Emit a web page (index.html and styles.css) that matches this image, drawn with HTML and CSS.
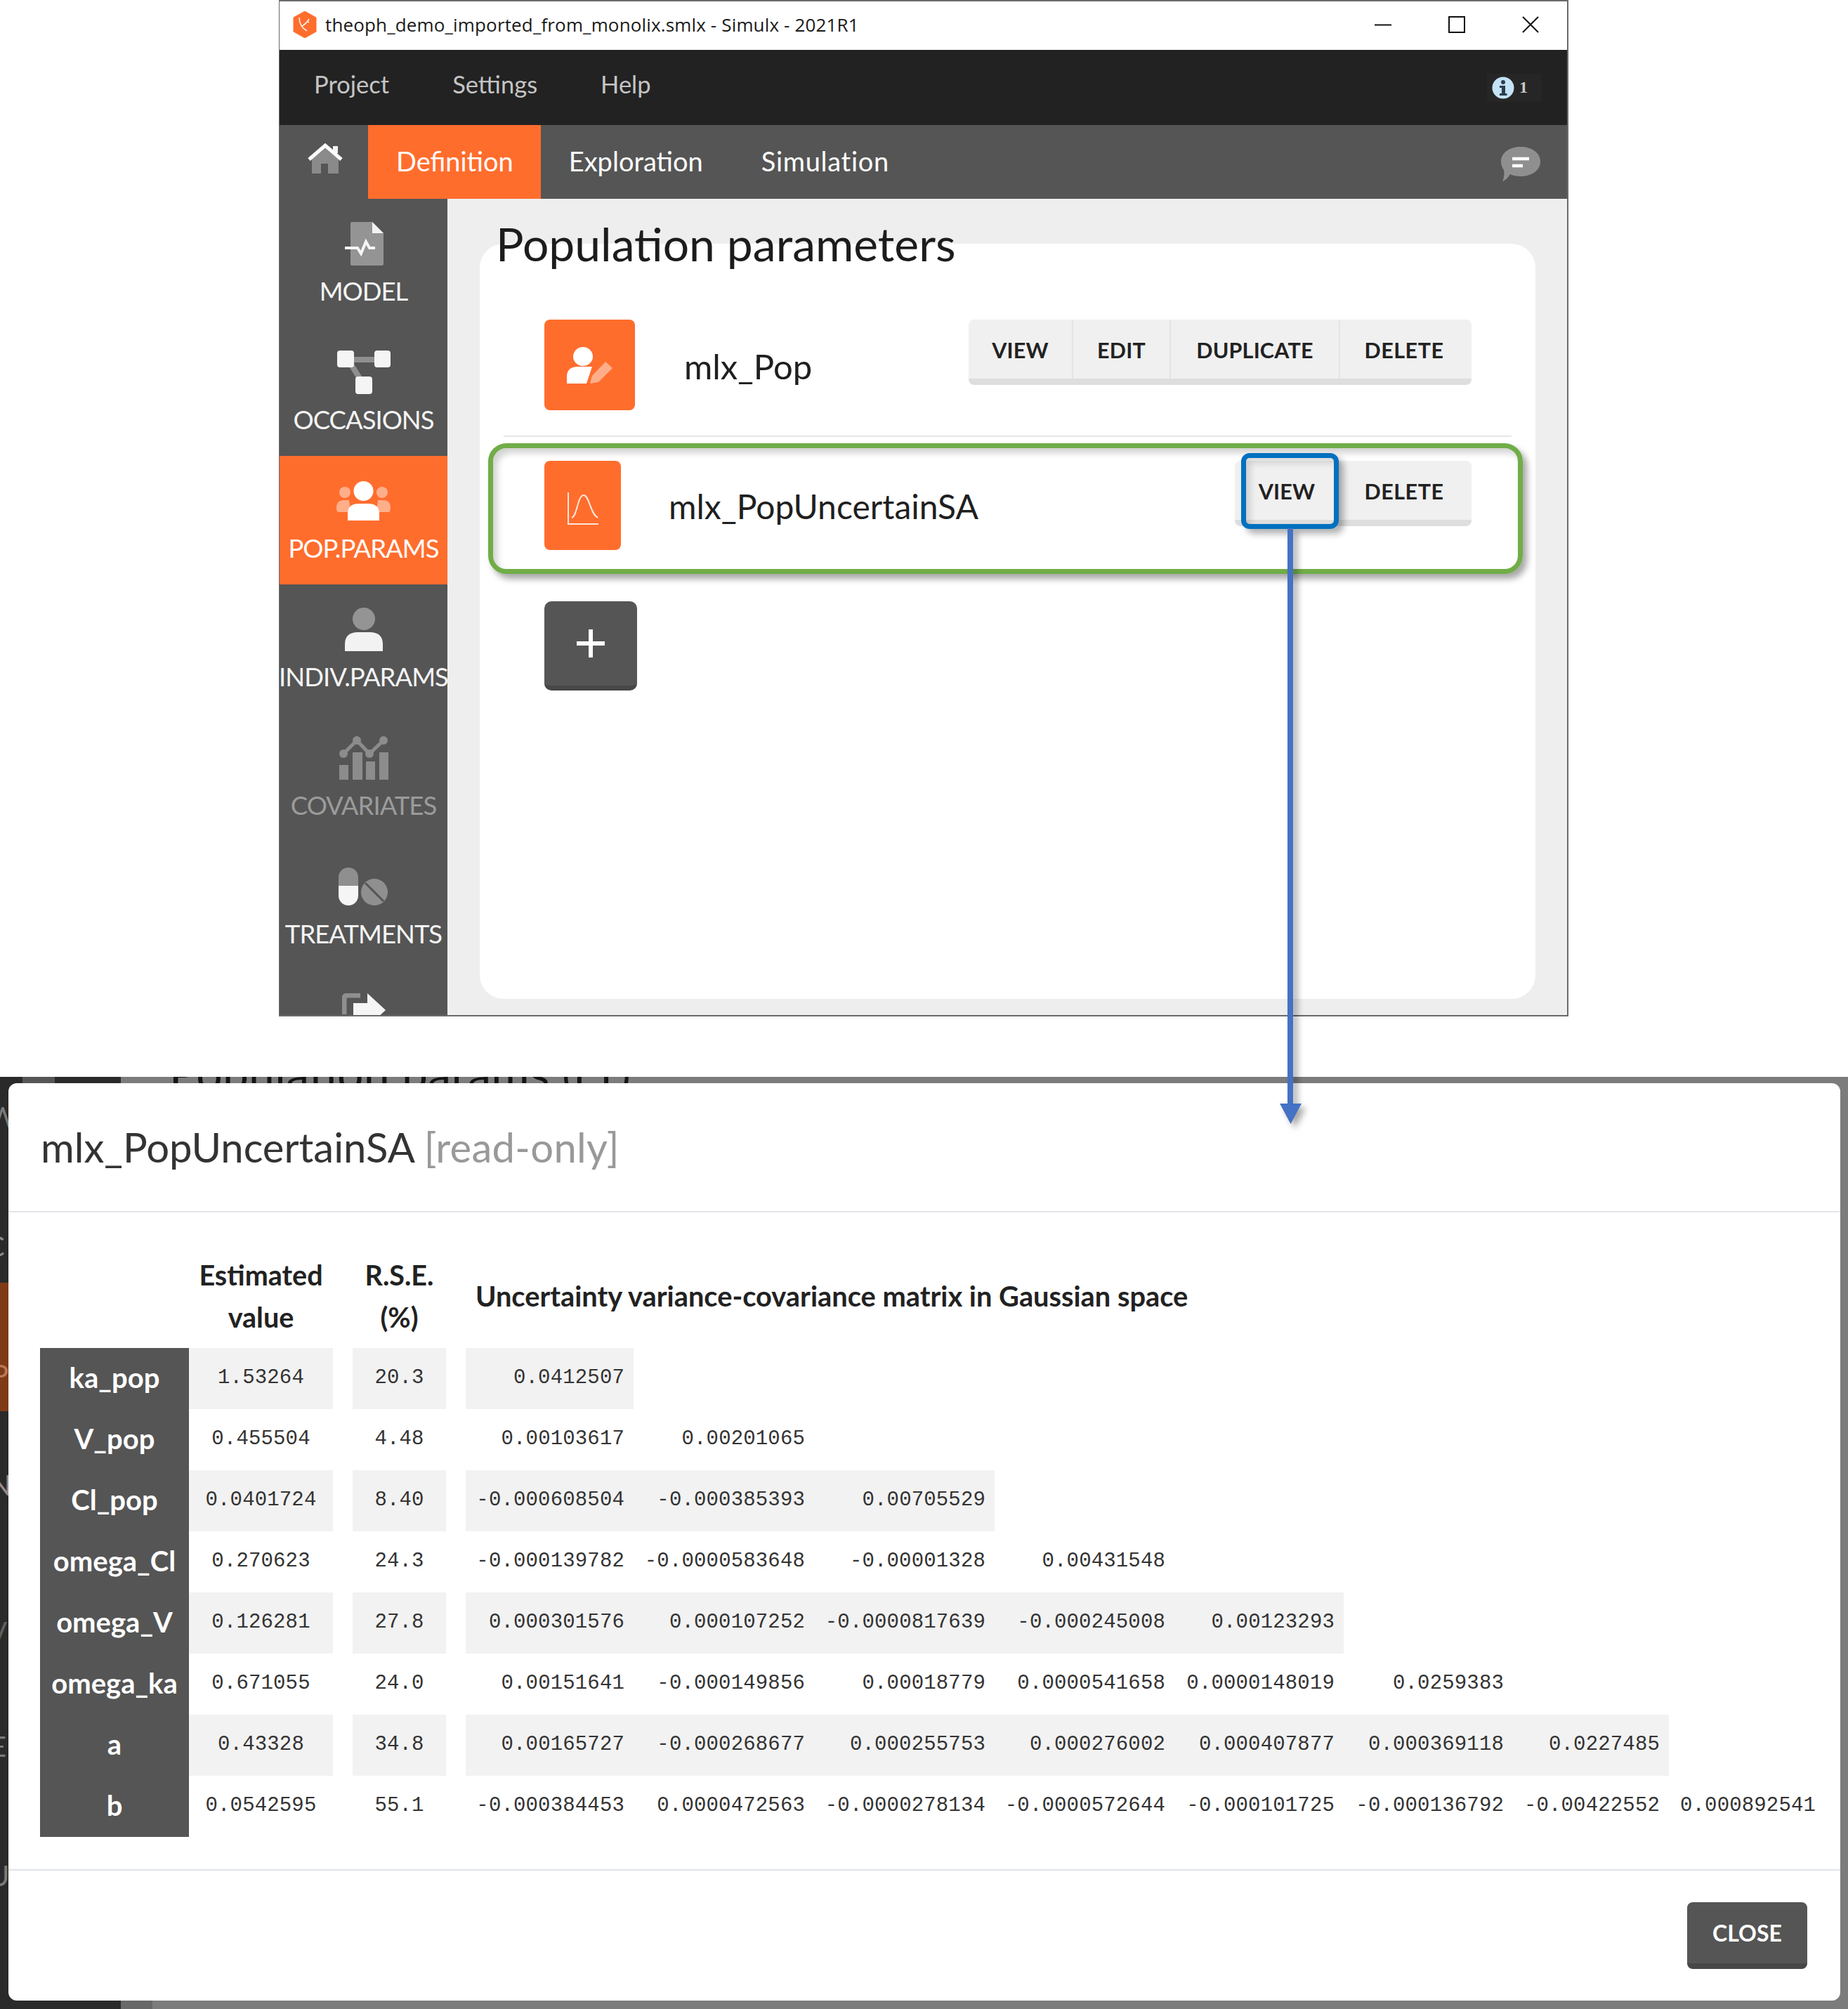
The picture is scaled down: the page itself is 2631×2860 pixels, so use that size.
FILE: index.html
```html
<!DOCTYPE html>
<html lang="en">
<head>
<meta charset="utf-8">
<title>Simulx population parameters</title>
<link rel="stylesheet" href="styles.css">
</head>
<body>
<div class="page">
  <section class="window">
    <header class="titlebar">
      <svg class="logo" viewBox="0 0 34 38" width="34" height="38"><path d="M17 0 33 9V29L17 38 1 29V9Z" fill="#ff6d2d" stroke="#ff6d2d" stroke-linejoin="round" stroke-width="1"/><path d="M9 9c0 9 4 15 11 19M13 21c4-2 7-5 10-10M21 15l2 1" fill="none" stroke="#fff" stroke-width="1.6" opacity=".9"/></svg>
      <span class="doc-title">theoph_demo_imported_from_monolix.smlx - Simulx - 2021R1</span>
      <div class="win-controls">
        <svg viewBox="0 0 24 24" width="24" height="24"><path d="M0 12.500H24" stroke="#111" stroke-width="2"/></svg>
        <svg viewBox="0 0 24 24" width="24" height="24"><rect x="1" y="1" width="22" height="22" fill="none" stroke="#111" stroke-width="2"/></svg>
        <svg viewBox="0 0 24 24" width="24" height="24"><path d="M1 1 23 23M23 1 1 23" stroke="#111" stroke-width="2"/></svg>
      </div>
    </header>
    <nav class="menubar">
      <span>Project</span><span>Settings</span><span>Help</span>
      <div class="info"><svg viewBox="0 0 32 32" width="32" height="32"><circle cx="16" cy="16" r="15.500" fill="#c3e3f7"/><circle cx="16" cy="8" r="3" fill="#2b3f4e"/><path d="M11 13h8v11h2.500v3H11v-3h3v-8h-3Z" fill="#2b3f4e"/></svg><b>1</b></div>
    </nav>
    <nav class="navbar">
      <div class="home"><svg viewBox="0 0 50 44" width="50" height="44"><path d="M6 21 25 5 44 21V43H29V29H19V43H6Z" fill="#8a8a8a"/><path d="M36 4H43V14H36Z" fill="#f4f4f4"/><path d="M2 23 25 3 48 23" fill="none" stroke="#fff" stroke-width="5"/></svg></div>
      <a class="tab is-active">Definition</a>
      <a class="tab">Exploration</a>
      <a class="tab tab-sim">Simulation</a>
      <svg class="chat" viewBox="0 0 56 50" width="56" height="50"><path d="M28 0C43 0 56 8 56 21 56 34 43 42 28 42 22 42 17 41 13 39 10 44 6 48 2 49 4 45 5 40 4 33 1 29 0 25 0 21 0 8 13 0 28 0Z" fill="#8f8f8f"/><path d="M16 17H40M16 27H31" stroke="#fff" stroke-width="4.500"/></svg>
    </nav>
    <div class="workspace">
      <aside class="sidebar">
        <div class="side-item">
          <span class="side-icon"><svg viewBox="0 0 56 62" width="56" height="62"><path d="M9 2Q9 0 11 0H40L56 16V60Q56 62 54 62H11Q9 62 9 60Z" fill="#949494"/><path d="M40 0 56 16H40Z" fill="#f2f2f2"/><path d="M1 37H19L24 45 31 28 36 37H44" fill="none" stroke="#f5f5f5" stroke-width="4"/></svg></span>
          <span class="side-label">MODEL</span>
        </div>
        <div class="side-item">
          <span class="side-icon"><svg viewBox="0 0 76 62" width="76" height="62"><path d="M20 13H56M20 20 36 46" fill="none" stroke="#8f8f8f" stroke-width="8"/><rect x="0" y="0" width="24" height="24" rx="4" fill="#f5f5f5"/><rect x="53" y="0" width="23" height="24" rx="4" fill="#f5f5f5"/><rect x="26" y="37" width="24" height="25" rx="4" fill="#f5f5f5"/></svg></span>
          <span class="side-label">OCCASIONS</span>
        </div>
        <div class="side-item is-active">
          <span class="side-icon"><svg viewBox="0 0 77 56" width="77" height="56"><g fill="#ffae8a"><circle cx="12" cy="16" r="8"/><circle cx="65" cy="16" r="8"/><path d="M0 38Q0 27 11 27H18L20 44H3Q0 44 0 38ZM77 38Q77 27 66 27H59L57 44H74Q77 44 77 38Z"/></g><circle cx="38.500" cy="14" r="14" fill="#fff"/><path d="M16 56V46Q16 33 30 32H47Q61 33 61 46V56Z" fill="#fff"/></svg></span>
          <span class="side-label">POP.PARAMS</span>
        </div>
        <div class="side-item">
          <span class="side-icon"><svg viewBox="0 0 56 62" width="56" height="62"><circle cx="28" cy="16" r="16" fill="#949494"/><path d="M1 62V52Q1 36 18 35H38Q55 36 55 52V62Z" fill="#f2f2f2"/></svg></span>
          <span class="side-label">INDIV.PARAMS</span>
        </div>
        <div class="side-item is-dim">
          <span class="side-icon"><svg viewBox="0 0 70 62" width="70" height="62" fill="#8c8c8c"><path d="M6 25 25 6 43 25 63 6" fill="none" stroke="#8c8c8c" stroke-width="5"/><circle cx="6" cy="25" r="6"/><circle cx="25" cy="6" r="6"/><circle cx="43" cy="25" r="6"/><circle cx="63" cy="6" r="6"/><rect x="0" y="41" width="13" height="21"/><rect x="19" y="23" width="14" height="39"/><rect x="38" y="36" width="13" height="26"/><rect x="57" y="23" width="13" height="39"/></svg></span>
          <span class="side-label">COVARIATES</span>
        </div>
        <div class="side-item">
          <span class="side-icon"><svg viewBox="0 0 71 54" width="71" height="54"><path d="M0 26V14A14 14 0 0 1 28 14V26Z" fill="#8f8f8f"/><path d="M0 26H28V40A14 14 0 0 1 0 40Z" fill="#f5f5f5"/><circle cx="51" cy="35" r="19" fill="#8f8f8f"/><path d="M38 22 64 48" stroke="#555" stroke-width="3"/></svg></span>
          <span class="side-label">TREATMENTS</span>
        </div>
        <div class="side-item">
          <span class="side-icon"><svg viewBox="0 0 62 62" width="62" height="62"><path d="M3 30V8Q3 3 8 3H26" fill="none" stroke="#8f8f8f" stroke-width="7"/><path d="M16 14H36V0L62 24 36 48V34H16Z" fill="#f5f5f5"/></svg></span>
          <span class="side-label">EXPORT</span>
        </div>
      </aside>
      <main class="panel">
        <h1 class="panel-title">Population parameters</h1>
        <div class="card">
          <div class="row row-first">
            <span class="tile"><svg viewBox="0 0 65 52" width="65" height="52"><ellipse cx="23" cy="13.500" rx="14" ry="13.500" fill="#fff"/><path d="M0 52V42Q0 29 14 28H36L28 52Z" fill="#fff"/><path d="M33 52 36 41 55 21 65 30 45 50Z" fill="#ffae8a"/></svg></span>
            <span class="row-name">mlx_Pop</span>
            <div class="btn-group"><button class="b-view">VIEW</button><button class="b-edit">EDIT</button><button class="b-dup">DUPLICATE</button><button class="b-del">DELETE</button></div>
          </div>
          <div class="row row-second">
            <span class="tile tile-small"><svg viewBox="0 0 44 46" width="44" height="46"><path d="M1 0V45H44M6 36C14 34 14 4 23 4 31 4 32 30 43 36" fill="none" stroke="#ffe6da" stroke-width="2"/></svg></span>
            <span class="row-name">mlx_PopUncertainSA</span>
            <div class="btn-group"><button class="b-view2">VIEW</button><button class="b-del">DELETE</button></div>
          </div>
          <button class="add"><svg viewBox="0 0 40 40" width="40" height="40"><path d="M20 0V40M0 20H40" stroke="#fff" stroke-width="6"/></svg></button>
        </div>
      </main>
    </div>
  </section>

  <section class="stage">
    <div class="backdrop">
      <div class="rail">
        <span class="rl rl-w">W</span>
        <span class="rl rl-c">C</span>
        <div class="rail-active"><span class="rl">P</span></div>
        <span class="rl rl-n">N</span>
        <span class="rl rl-v">V</span>
        <span class="rl rl-e">E</span>
        <span class="rl rl-u">U</span>
      </div>
      <div class="bg-main"><span class="bg-title">Population params (r1)</span></div>
    </div>
    <div class="modal">
      <header class="modal-head"><span>mlx_PopUncertainSA</span> <span class="ro">[read-only]</span></header>
      <div class="modal-body">
        <table class="matrix">
          <colgroup>
            <col class="c-label"><col class="c-est"><col class="c-gap"><col class="c-rse"><col class="c-gap">
            <col class="c-m1"><col class="c-m2"><col class="c-m2"><col class="c-m4"><col class="c-m5"><col class="c-m5"><col class="c-m7"><col class="c-m7">
          </colgroup>
          <thead>
            <tr><th></th><th>Estimated<br>value</th><th></th><th>R.S.E.<br>(%)</th><th></th><th colspan="8" class="th-left">Uncertainty variance-covariance matrix in Gaussian space</th></tr>
          </thead>
          <tbody>
            <tr class="alt"><th>ka_pop</th><td class="v c">1.53264</td><td></td><td class="v c">20.3</td><td></td><td class="v">0.0412507</td><td></td><td></td><td></td><td></td><td></td><td></td><td></td></tr>
            <tr><th>V_pop</th><td class="v c">0.455504</td><td></td><td class="v c">4.48</td><td></td><td class="v">0.00103617</td><td class="v">0.00201065</td><td></td><td></td><td></td><td></td><td></td><td></td></tr>
            <tr class="alt"><th>Cl_pop</th><td class="v c">0.0401724</td><td></td><td class="v c">8.40</td><td></td><td class="v">-0.000608504</td><td class="v">-0.000385393</td><td class="v">0.00705529</td><td></td><td></td><td></td><td></td><td></td></tr>
            <tr><th>omega_Cl</th><td class="v c">0.270623</td><td></td><td class="v c">24.3</td><td></td><td class="v">-0.000139782</td><td class="v">-0.0000583648</td><td class="v">-0.00001328</td><td class="v">0.00431548</td><td></td><td></td><td></td><td></td></tr>
            <tr class="alt"><th>omega_V</th><td class="v c">0.126281</td><td></td><td class="v c">27.8</td><td></td><td class="v">0.000301576</td><td class="v">0.000107252</td><td class="v">-0.0000817639</td><td class="v">-0.000245008</td><td class="v">0.00123293</td><td></td><td></td><td></td></tr>
            <tr><th>omega_ka</th><td class="v c">0.671055</td><td></td><td class="v c">24.0</td><td></td><td class="v">0.00151641</td><td class="v">-0.000149856</td><td class="v">0.00018779</td><td class="v">0.0000541658</td><td class="v">0.0000148019</td><td class="v">0.0259383</td><td></td><td></td></tr>
            <tr class="alt"><th>a</th><td class="v c">0.43328</td><td></td><td class="v c">34.8</td><td></td><td class="v">0.00165727</td><td class="v">-0.000268677</td><td class="v">0.000255753</td><td class="v">0.000276002</td><td class="v">0.000407877</td><td class="v">0.000369118</td><td class="v">0.0227485</td><td></td></tr>
            <tr><th>b</th><td class="v c">0.0542595</td><td></td><td class="v c">55.1</td><td></td><td class="v">-0.000384453</td><td class="v">0.0000472563</td><td class="v">-0.0000278134</td><td class="v">-0.0000572644</td><td class="v">-0.000101725</td><td class="v">-0.000136792</td><td class="v">-0.00422552</td><td class="v">0.000892541</td></tr>
          </tbody>
        </table>
      </div>
      <footer class="modal-foot"><button class="close">CLOSE</button></footer>
    </div>
  </section>

  <div class="callout-green"></div>
  <div class="callout-blue"></div>
  <svg class="arrow" viewBox="0 0 60 850" width="60" height="850"><rect x="26" y="0" width="8" height="822" fill="#4472c4"/><path d="M15 819H46L30.500 848Z" fill="#4472c4"/></svg>
</div>
</body>
</html>
```

FILE: styles.css
```css
* { box-sizing: border-box; }
html, body { margin: 0; padding: 0; background: #fff; }
body { font-family: "Lato", "Liberation Sans", sans-serif; color: #222; }
.page { position: relative; width: 2631px; height: 2860px; overflow: hidden; }
button { font: inherit; border: 0; cursor: pointer; }

/* top application window */
.window { margin-left: 397px; width: 1836px; height: 1447px; border: 2px solid #6a6a6a; border-width: 2px 2px 2px 1px; display: flex; flex-direction: column; background: #eee; overflow: hidden; }
.titlebar { height: 69px; background: #fff; display: flex; align-items: center; padding-left: 19px; padding-bottom: 3px; flex: none; }
.logo { flex: none; }
.doc-title { margin-left: 12px; font-family: "Open Sans", sans-serif; font-size: 26px; color: #1a1a1a; letter-spacing: .15px; white-space: nowrap; }
.win-controls { margin-left: auto; display: flex; gap: 81px; padding-right: 40px; align-items: center; }
.menubar { height: 107px; flex: none; background: #222; display: flex; align-items: center; padding-left: 49px; padding-bottom: 10px; gap: 90px; font-size: 34.5px; color: #c4c4c4; }
.info { margin-left: auto; margin-right: 36px; margin-top: 10px; padding: 4px 20px 4px 7px; background: #262626; display: flex; align-items: center; gap: 7px; font-size: 24px; }
.info b { font-family: "Liberation Serif", serif; font-size: 24px; color: #c8c8c8; }
.navbar { height: 105px; flex: none; background: #555; display: flex; align-items: stretch; }
.home { width: 126px; display: flex; justify-content: center; padding-top: 26px; padding-left: 3px; }
.tab { padding: 0 40px 4px; display: flex; align-items: center; font-size: 38px; color: #fff; }
.tab.is-active { background: #ff6d2d; padding: 0 39px 4px 40px; }
.tab-sim { letter-spacing: .7px; margin-left: 3px; }
.chat { margin-left: auto; margin-right: 38px; margin-top: 31px; }
.workspace { flex: 1; display: flex; min-height: 0; }
.sidebar { width: 239px; flex: none; background: #555; display: flex; flex-direction: column; overflow: hidden; }
.side-item { height: 183px; flex: none; padding-top: 33px; display: flex; flex-direction: column; align-items: center; color: #f4f4f4; }
.side-item.is-active { background: #ff6d2d; color: #fff; }
.side-item.is-dim { color: #9b9b9b; }
.side-icon { height: 62px; display: flex; align-items: center; justify-content: center; }
.side-label { margin-top: 16px; line-height: 40px; font-size: 36.5px; white-space: nowrap; letter-spacing: -1px; }
.panel { position: relative; flex: 1; padding: 64px 45px 23px 46px; display: flex; min-width: 0; }
.panel-title { position: absolute; z-index: 1; left: 69px; top: 24px; margin: 0; font-size: 66px; line-height: 80px; font-weight: 400; color: #1c1c1c; white-space: nowrap; }
.card { flex: 1; background: #fff; border-radius: 34px; padding: 108px 34px 0 34px; display: flex; flex-direction: column; align-items: flex-start; }
.row { align-self: stretch; display: flex; align-items: flex-start; padding: 0 57px 0 58px; }
.row-first { height: 167px; border-bottom: 2px solid #e6e6e6; }
.row-second { height: 234px; padding-top: 34px; }
.tile { width: 129px; height: 129px; flex: none; background: #ff6d2d; border-radius: 8px; display: flex; align-items: center; justify-content: center; }
.tile-small { width: 109px; height: 127px; padding-top: 8px; }
.row-name { font-size: 48px; line-height: 64px; color: #1f1f1f; white-space: nowrap; }
.row-first .row-name { margin: 34px 0 0 70px; font-size: 49px; }
.row-second .row-name { margin: 33px 0 0 68px; }
.btn-group { margin-left: auto; display: flex; background: #f0f0f0; border-radius: 8px; border-bottom: 9px solid #dedede; height: 93px; overflow: hidden; }
.btn-group button { height: 84px; background: none; font-weight: 700; font-size: 30.5px; color: #222; letter-spacing: .2px; border-right: 2px solid #e4e4e4; padding: 2px 0 0; }
.btn-group button:last-child { border-right: 0; padding-right: 5px; letter-spacing: .5px; }
.b-view { width: 149px; } .b-edit { width: 139px; } .b-dup { width: 241px; } .b-del { width: 187px; } .b-view2 { width: 150px; }
.add { margin-left: 58px; margin-top: 0; width: 132px; height: 127px; border-radius: 10px; background: #555; border-bottom: 7px solid #474747; display: flex; align-items: center; justify-content: center; padding: 0; }

/* bottom dialog */
.stage { position: relative; margin-top: 86px; height: 1327px; overflow: hidden; }
.backdrop { display: flex; height: 100%; }
.rail { width: 172px; flex: none; background: linear-gradient(#565656, #565656) 32px 0 / 46px 10px no-repeat, #2a2a2a; display: flex; flex-direction: column; align-items: flex-start; overflow: hidden; }
.rl { display: block; line-height: 40px; font-size: 40px; color: #7a7a7a; margin-left: -17px; white-space: nowrap; }
.rl-w { margin-top: 37px; }
.rl-c { margin-top: 144px; margin-left: -20px; color: #8a8a8a; }
.rail-active { margin-top: 32px; width: 100%; height: 183px; background: #7f3a17; padding-top: 111px; flex: none; }
.rail-active .rl { color: #b87a58; margin-left: -12px; }
.rl-n { margin-top: 85px; margin-left: -14px; color: #9a8a8a; }
.rl-v { margin-top: 169px; color: #5f5f5f; }
.rl-e { margin-top: 123px; margin-left: -14px; }
.rl-u { margin-top: 144px; margin-left: -16px; }
.bg-main { flex: 1; background: linear-gradient(#686868, #686868) 0 100% / 45px 14px no-repeat, #7c7c7c; padding-left: 69px; overflow: hidden; }
.bg-title { display: block; margin-top: -46px; font-size: 66px; line-height: 80px; color: #141414; white-space: nowrap; letter-spacing: .3px; }
.modal { position: absolute; left: 12px; right: 11px; top: 9px; bottom: 12px; background: #fff; border-radius: 12px; display: flex; flex-direction: column; }
.modal-head { height: 184px; flex: none; border-bottom: 2px solid #e2e6ea; padding: 57px 0 0 46px; font-size: 58px; line-height: 68px; color: #333; white-space: nowrap; }
.ro { color: #999; letter-spacing: .3px; }
.modal-body { height: 937px; flex: none; padding: 59px 0 0 45px; border-bottom: 2px solid #dfe4ea; }
.matrix { table-layout: fixed; border-collapse: collapse; border-spacing: 0; width: 2541px; }
.c-label { width: 212px; } .c-est { width: 205px; } .c-gap { width: 28px; } .c-rse { width: 133px; }
.c-m1 { width: 239px; } .c-m2 { width: 257px; } .c-m4 { width: 256px; } .c-m5 { width: 241px; } .c-m7 { width: 222px; }
.matrix thead th { height: 133px; padding: 0 0 14px; font-size: 39.5px; line-height: 60px; font-weight: 700; color: #222; text-align: center; white-space: nowrap; }
.matrix thead th.th-left { text-align: left; padding-left: 14px; font-size: 39.8px; }
.matrix tbody th { height: 87px; padding: 0 0 3px; background: #555; color: #fff; font-size: 40px; font-weight: 700; text-align: center; white-space: nowrap; }
.matrix td { height: 87px; padding: 0 13px 2px 0; }
.v { font-family: "Liberation Mono", monospace; font-size: 29px; letter-spacing: .15px; color: #333; text-align: right; white-space: nowrap; }
.v.c { text-align: center; padding-right: 0; }
.alt .v { background: #f2f2f2; }
.modal-foot { flex: 1; display: flex; justify-content: flex-end; padding: 45px 47px 0 0; align-items: flex-start; }
.close { width: 171px; height: 95px; border-radius: 8px; background: #555; border-bottom: 8px solid #474747; color: #fff; font-weight: 700; font-size: 32px; padding: 0; }

/* annotations drawn over the screenshots */
.callout-green { position: absolute; left: 695px; top: 631px; width: 1473px; height: 186px; border: 7px solid #70ad47; border-radius: 26px; box-shadow: 6px 7px 10px rgba(0,0,0,.35), inset 6px 7px 10px rgba(0,0,0,.18); }
.callout-blue { position: absolute; left: 1767px; top: 645px; width: 139px; height: 108px; border: 7px solid #0070c0; border-radius: 12px; box-shadow: 7px 7px 10px rgba(0,0,0,.3), inset 6px 7px 10px rgba(0,0,0,.14); }
.arrow { position: absolute; left: 1807px; top: 752px; filter: drop-shadow(6px 6px 5px rgba(0,0,0,.35)); }
```
